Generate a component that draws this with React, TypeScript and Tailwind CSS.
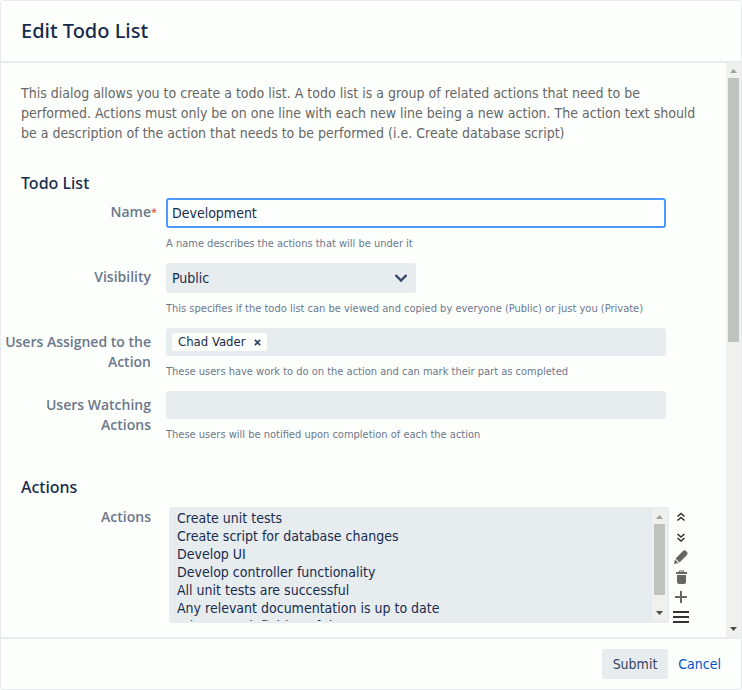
import { useState, type ReactNode } from 'react';

const ACTIONS = [
  'Create unit tests',
  'Create script for database changes',
  'Develop UI',
  'Develop controller functionality',
  'All unit tests are successful',
  'Any relevant documentation is up to date',
  'It has met definition of done',
];

function Field({ label, htmlFor, required, flush, hint, children }: {
  label: string; htmlFor: string; required?: boolean; flush?: boolean; hint?: string; children: ReactNode;
}) {
  return (
    <div className="flex">
      <label htmlFor={htmlFor} className={`relative mr-[15px] w-[150px] shrink-0 text-right font-['Open_Sans',sans-serif] font-semibold leading-5 text-[#6b778c] ${flush ? '' : 'pt-1'}`}>
        {label}
        {required && <span className="absolute left-full top-1 text-[11px] font-normal text-[#de350b]">*</span>}
      </label>
      <div className="min-w-0 flex-1">
        {children}
        {hint && <p className="pt-2 text-[11px] leading-4 text-[#6b778c]">{hint}</p>}
      </div>
    </div>
  );
}

function Scrollbar({ thumb }: { thumb: string }) {
  return (
    <div aria-hidden="true" className="flex w-[15px] shrink-0 flex-col items-center bg-[#f0f1ef]">
      <svg className="h-[15px] w-[15px] shrink-0" viewBox="0 0 15 15"><path d="M4 10 7.5 6 11 10Z" fill="#a0a29f" /></svg>
      <div className={`w-[11px] bg-[#c0c2bf] ${thumb}`} />
      <svg className="mt-auto h-[15px] w-[15px] shrink-0" viewBox="0 0 15 15"><path d="M4 5 7.5 9 11 5Z" fill="#4b4d4b" /></svg>
    </div>
  );
}

const TOOLS: { name: string; icon: ReactNode }[] = [
  { name: 'Move to top', icon: <path d="M6.5 9.5 10 6.5 13.5 9.5M6.5 13.5 10 10.5 13.5 13.5" fill="none" stroke="#333" strokeWidth="1.6" /> },
  { name: 'Move to bottom', icon: <path d="M6.5 7 10 10 13.5 7M6.5 11 10 14 13.5 11" fill="none" stroke="#333" strokeWidth="1.6" /> },
  { name: 'Edit', icon: <path d="M3 17 4 12.5 7.5 16ZM4.5 11.5 12 4Q13.5 2.7 15 4L16 5Q17.3 6.5 16 8L8.5 15.5Z" fill="#666" /> },
  { name: 'Delete', icon: <path fillRule="evenodd" d="M5 5H8V3.5H13V5H16V7H5ZM9 4.5V5H12V4.5ZM6 8H15V15Q15 17 13 17H8Q6 17 6 15Z" fill="#666" /> },
  { name: 'Add', icon: <path d="M4 10H16M10 4V16" stroke="#666" strokeWidth="2" /> },
  { name: 'Bulk edit', icon: <path d="M2 5H18M2 10H18M2 15H18" stroke="#333" strokeWidth="2" /> },
];

export default function App() {
  const [name, setName] = useState('Development');
  return (
    <div className="flex h-screen flex-col overflow-hidden rounded-[3px] border border-[#e7ecef] bg-[#fdfffc] font-['DejaVu_Sans_Condensed','Open_Sans',sans-serif] text-[14px] leading-5 text-[#172b4d]">
      <header className="shrink-0 border-b-2 border-[#e7ecef] px-5 py-[15px]">
        <h1 className="font-['Noto_Sans',sans-serif] text-[20px] font-medium leading-[30px]">Edit Todo List</h1>
      </header>

      <div className="flex min-h-0 flex-1">
        <form id="todo-form" className="min-w-0 flex-1 overflow-hidden pt-5">
          <p className="px-5 text-[#666]">
            This dialog allows you to create a todo list. A todo list is a group of related actions that need to be performed. Actions must only be on one line with each new line being a new action. The action text should be a description of the action that needs to be performed (i.e. Create database script)
          </p>

          <h2 className="mt-[30px] px-5 font-['Noto_Sans',sans-serif] text-[16px] font-medium leading-5">Todo List</h2>
          <div className="mt-[5px] flex flex-col gap-[11px]">
            <Field label="Name" htmlFor="name" required hint="A name describes the actions that will be under it">
              <input id="name" value={name} onChange={(e) => setName(e.target.value)} className="block h-[30px] w-full max-w-[500px] rounded-[3px] border-2 border-[#4c9aff] bg-[#fdfffc] px-1 outline-none" />
            </Field>
            <Field label="Visibility" htmlFor="visibility" hint="This specifies if the todo list can be viewed and copied by everyone (Public) or just you (Private)">
              <div className="relative w-[250px]">
                <select id="visibility" className="block h-[30px] w-full appearance-none rounded-[3px] bg-[#e7ecef] px-[6px]">
                  <option>Public</option>
                  <option>Private</option>
                </select>
                <svg className="pointer-events-none absolute right-2 top-[9px] h-3 w-[14px]" viewBox="0 0 14 12"><path d="M1.5 3 7 8.5 12.5 3" fill="none" stroke="#344563" strokeWidth="2.3" /></svg>
              </div>
            </Field>
            <Field label="Users Assigned to the Action" htmlFor="assigned" hint="These users have work to do on the action and can mark their part as completed">
              <div className="flex h-7 w-full max-w-[500px] items-center rounded-[3px] bg-[#e7ecef] px-[6px]">
                <span className="flex h-[18px] items-center gap-[9px] rounded-[3px] bg-[#fdfffc] px-[6px] text-[13px]">
                  Chad Vader
                  <button type="button" aria-label="Remove Chad Vader"><svg className="h-[7px] w-[7px]" viewBox="0 0 8 8"><path d="M1 1 7 7M7 1 1 7" stroke="#344563" strokeWidth="2" /></svg></button>
                </span>
                <input id="assigned" className="min-w-0 flex-1 bg-transparent outline-none" />
              </div>
            </Field>
            <Field label="Users Watching Actions" htmlFor="watching" hint="These users will be notified upon completion of each the action">
              <input id="watching" className="block h-7 w-full max-w-[500px] rounded-[3px] bg-[#e7ecef] px-[6px] outline-none" />
            </Field>
          </div>

          <h2 className="mt-[34px] px-5 font-['Noto_Sans',sans-serif] text-[16px] font-medium leading-5">Actions</h2>
          <div className="mt-[10px]">
            <Field label="Actions" htmlFor="actions" flush>
              <div className="flex gap-[2px] pl-[3px]">
                <div className="flex h-[116px] w-full max-w-[500px] rounded-[3px] border-2 border-[#e7ecef] bg-[#e7ecef]">
                  <select id="actions" multiple className="h-full min-w-0 flex-1 overflow-hidden bg-transparent px-1 py-px [scrollbar-width:none]">
                    {ACTIONS.map((a) => <option key={a} className="h-[18px] min-h-0 p-0 px-[2px] leading-[18px]">{a}</option>)}
                  </select>
                  <Scrollbar thumb="h-[71px]" />
                </div>
                <div className="flex shrink-0 flex-col">
                  {TOOLS.map((t) => (
                    <button key={t.name} type="button" aria-label={t.name} className="h-5 w-5"><svg className="h-5 w-5" viewBox="0 0 20 20">{t.icon}</svg></button>
                  ))}
                </div>
              </div>
            </Field>
          </div>
        </form>
        <Scrollbar thumb="h-[264px]" />
      </div>

      <footer className="flex shrink-0 items-center justify-end gap-[10px] border-t-2 border-[#e7ecef] px-5 py-[10px]">
        <button type="submit" form="todo-form" className="h-[30px] rounded-[3px] bg-[#e7ecef] px-[11px] text-[#344563]">Submit</button>
        <a href="#cancel" className="text-[#0052cc]">Cancel</a>
      </footer>
    </div>
  );
}
